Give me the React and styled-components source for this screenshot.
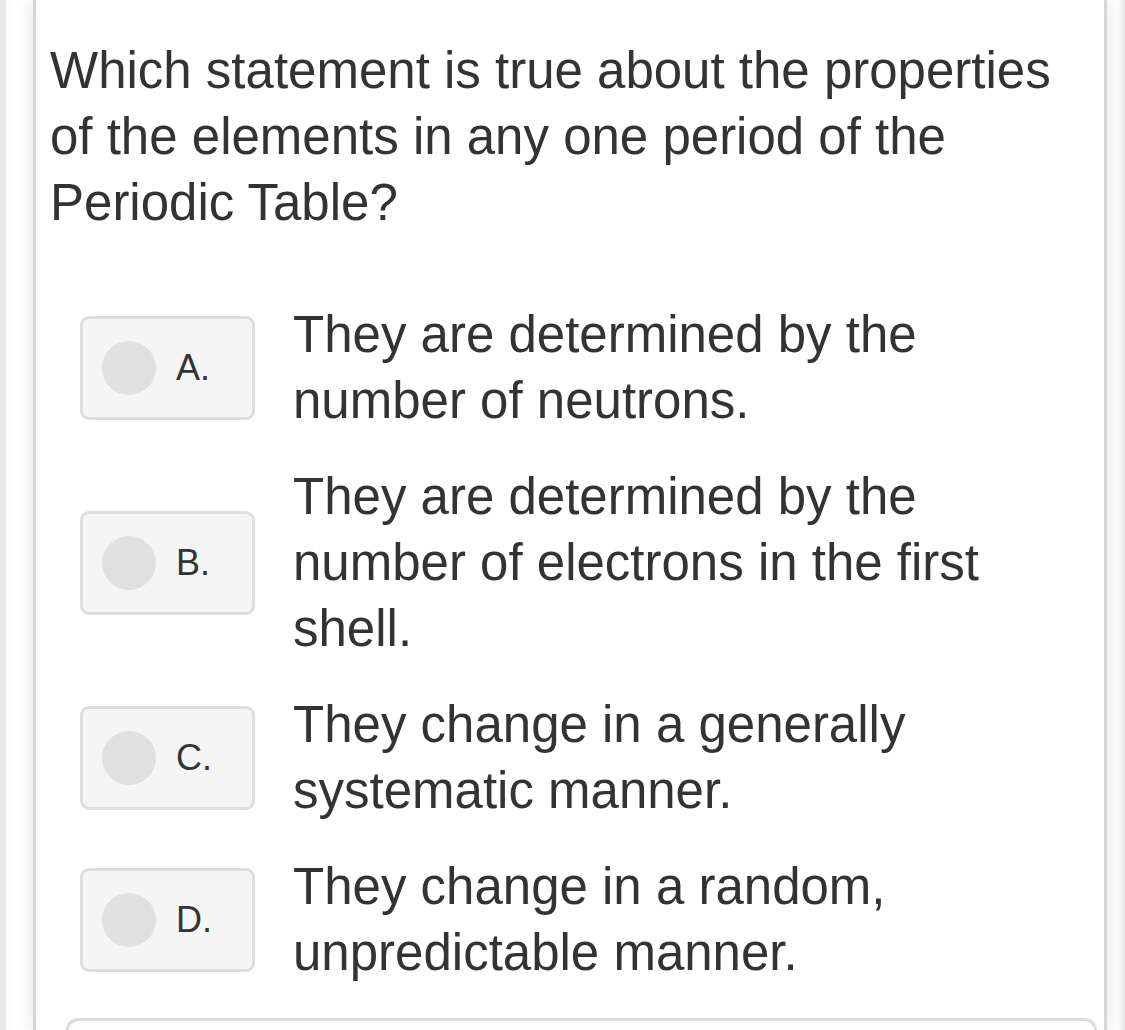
import React from "react";
import styled, { createGlobalStyle } from "styled-components";

const GlobalStyle = createGlobalStyle`
  html, body {
    margin: 0;
    padding: 0;
    background: #ffffff;
  }
  body {
    font-family: "Liberation Sans", Arial, Helvetica, sans-serif;
    color: #333333;
  }
`;

const Page = styled.div`
  display: flex;
  box-sizing: border-box;
  height: 1030px;
  overflow: hidden;
  border-left: 6px solid #e8e8e8;
  padding: 0 18px 0 27px;
  background: linear-gradient(
    to right,
    #fcfcfc 0,
    #ffffff 10px,
    #ffffff calc(100% - 7px),
    #e2e2e2 100%
  );
`;

const Card = styled.section`
  flex: 1;
  display: flex;
  flex-direction: column;
  background: #ffffff;
  border-left: 3px solid #d6d6d6;
  border-right: 3px solid #d6d6d6;
  box-shadow: 0 0 16px rgba(0, 0, 0, 0.12);
  padding: 38px 14px 0 14px;
`;

const Question = styled.p`
  margin: 0;
  font-size: 51px;
  line-height: 66px;
  color: #333333;
`;

const Options = styled.div`
  display: flex;
  flex-direction: column;
  gap: 30px;
  margin: 66px 0 0 30px;
  padding-bottom: 32px;
`;

const OptionRow = styled.div`
  display: flex;
  align-items: center;
  gap: 38px;
`;

const ChoiceBox = styled.div`
  flex: 0 0 auto;
  box-sizing: border-box;
  width: 175px;
  height: 104px;
  display: flex;
  align-items: center;
  gap: 20px;
  padding-left: 19px;
  background: #f5f5f5;
  border: 3px solid #dedede;
  border-radius: 9px;
`;

const Dot = styled.span`
  width: 54px;
  height: 54px;
  border-radius: 50%;
  background: #e0e0e0;
`;

const Letter = styled.span`
  font-size: 36px;
  line-height: 1;
  color: #333333;
`;

const OptionText = styled.div`
  flex: 1;
  font-size: 51px;
  line-height: 66px;
  color: #333333;
`;

const NextCard = styled.div`
  height: 60px;
  margin: 0 -7px 0 16px;
  border: 3px solid #dddddd;
  border-bottom: none;
  border-radius: 15px 15px 0 0;
  background: #fdfdfd;
`;

const options = [
  { letter: "A.", text: "They are determined by the number of neutrons." },
  {
    letter: "B.",
    text: "They are determined by the number of electrons in the first shell.",
  },
  { letter: "C.", text: "They change in a generally systematic manner." },
  { letter: "D.", text: "They change in a random, unpredictable manner." },
];

export default function App() {
  return (
    <>
      <GlobalStyle />
      <Page>
        <Card>
          <Question>
            Which statement is true about the properties of the elements in any
            one period of the Periodic Table?
          </Question>
          <Options>
            {options.map((o) => (
              <OptionRow key={o.letter}>
                <ChoiceBox>
                  <Dot />
                  <Letter>{o.letter}</Letter>
                </ChoiceBox>
                <OptionText>{o.text}</OptionText>
              </OptionRow>
            ))}
          </Options>
          <NextCard />
        </Card>
      </Page>
    </>
  );
}
